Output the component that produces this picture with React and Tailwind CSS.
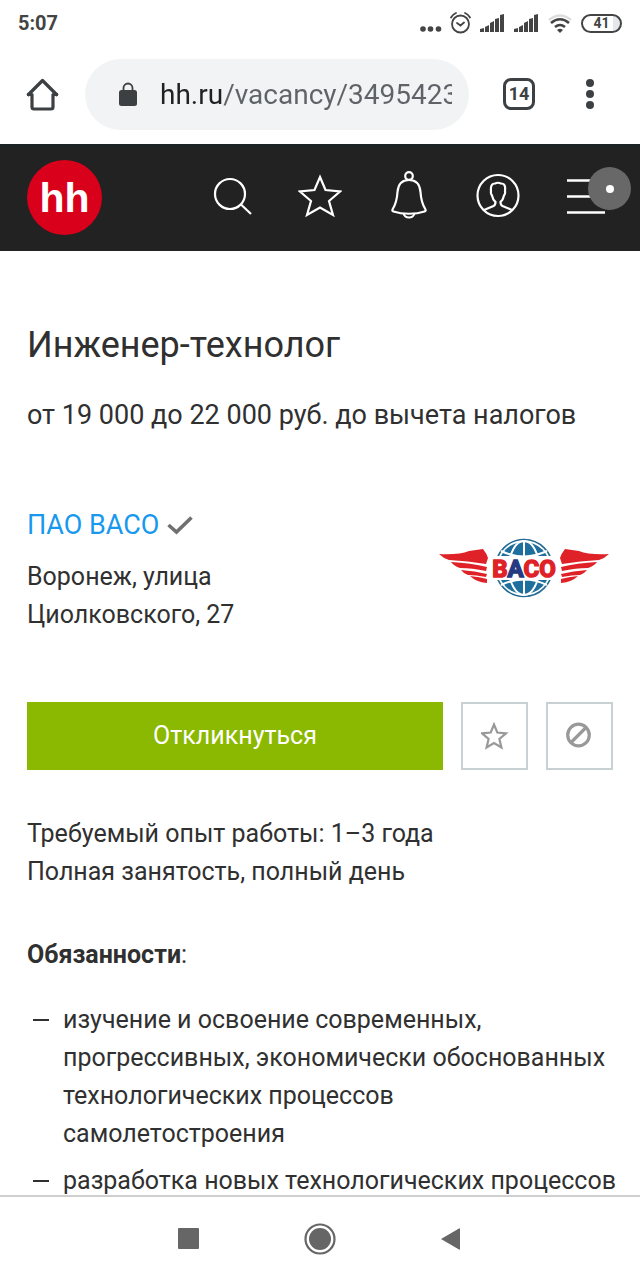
import React, { useState } from "react";

const duties = [
  "изучение и освоение современных, прогрессивных, экономически обоснованных технологических процессов самолетостроения",
  "разработка новых технологических процессов",
];

const SignalIcon = () => (
  <svg width="25" height="18" viewBox="0 0 25 18" fill="#444">
    <path d="M0 18v-3l4-1v4zM5 18v-5l4-2v7zM10 18V9l4-2v11zM15 18V5l4-1v14zM20 18V1l4-1v18z" />
  </svg>
);

const StatusBar = () => (
  <div className="flex h-[50px] shrink-0 items-center justify-between pr-[18px] pb-1 pl-[18px] text-[#444]">
    <span className="text-[20px] leading-6 font-bold">5:07</span>
    <div className="flex items-center gap-[9px]">
      <div className="flex items-center gap-2">
        <svg width="22" height="22" viewBox="0 0 22 22" fill="#444">
          <circle cx="3" cy="17" r="2.8" />
          <circle cx="10.5" cy="17" r="2.8" />
          <circle cx="18.5" cy="17" r="2.8" />
        </svg>
        <svg width="21" height="22" viewBox="0 0 21 22" fill="none" stroke="#444" strokeWidth="1.8" strokeLinecap="round">
          <circle cx="10.5" cy="12" r="8.5" />
          <path d="M7 11l3.500 2.500 3.500-3M1 5.500Q2.500 2.500 6 1M20 5.500Q18.500 2.500 15 1" />
        </svg>
      </div>
      <SignalIcon />
      <SignalIcon />
      <svg width="24" height="19" viewBox="0 0 24 19" fill="none" strokeWidth="2.600">
        <path d="M1 6Q12-3 23 6" stroke="#ddd" />
        <path d="M3 9Q12 1.500 21 9" stroke="#444" />
        <path d="M7 13Q12 9 17 13" stroke="#444" />
        <path d="M9 16q3-2.500 6 0l-3 3z" fill="#444" stroke="none" />
      </svg>
      <span className="flex h-[19px] w-[41px] items-center justify-center rounded-full border-2 border-[#444] bg-linear-to-r from-white from-80% to-gray-200 to-80% text-[14px] leading-4 font-bold">
        41
      </span>
    </div>
  </div>
);

const BrowserBar = () => {
  const [url, setUrl] = useState("hh.ru/vacancy/34954235");

  return (
    <div className="flex h-[94px] shrink-0 items-center justify-between pr-[39px] pb-1.5 pl-[26px]">
      <button aria-label="Домой">
        <svg width="33" height="33" viewBox="0 0 33 33" fill="none" stroke="#3c4043" strokeWidth="3.200">
          <path d="M1.500 17.500L16.500 2.500l15 15M1 16.500h5V29q0 2 2 2h17q2 0 2-2V16.500h5" strokeLinejoin="round" />
        </svg>
      </button>
      <label className="ml-[26px] flex h-[71px] min-w-0 flex-1 items-center rounded-full bg-[#f1f3f4] pr-[17px] pl-[34px]">
        <svg className="shrink-0" width="18" height="25" viewBox="0 0 18 25" fill="none">
          <path d="M4.500 10V6a4.500 4.500 0 0 1 9 0v4" stroke="#3c4043" strokeWidth="1.800" />
          <rect y="8" width="18" height="16" rx="2.500" fill="#3c4043" />
        </svg>
        <input
          aria-label="Адрес"
          value={url}
          onChange={(e) => setUrl(e.target.value)}
          className="ml-[23px] w-full min-w-0 bg-[linear-gradient(90deg,#202124_63px,#5f6368_63px)] bg-clip-text pt-0.5 text-[28px] leading-9 text-transparent outline-none"
        />
      </label>
      <button
        aria-label="Вкладки"
        className="ml-[34px] flex size-8 items-center justify-center rounded-lg border-3 border-[#3c4043] text-[18px] leading-5 font-bold text-[#3c4043]"
      >
        14
      </button>
      <button aria-label="Меню браузера" className="ml-[44px] flex w-[22px] justify-center">
        <svg width="8" height="30" viewBox="0 0 8 30" fill="#3c4043">
          <circle cx="4" cy="4" r="4" />
          <circle cx="4" cy="15" r="4" />
          <circle cx="4" cy="26" r="4" />
        </svg>
      </button>
    </div>
  );
};

const SiteHeader = () => (
  <header className="relative flex h-[107px] shrink-0 items-center border-t-4 border-[#1b2422] bg-[#222] pr-[29px] pb-1 pl-[27px]">
    <a
      href="#"
      className="flex size-[75px] items-center justify-center rounded-full bg-[#d9001b] font-['Liberation_Sans',sans-serif] text-[41px] leading-[48px] font-bold text-white"
    >
      hh
    </a>
    <nav className="ml-auto flex items-center gap-[45px] pb-1">
      <button aria-label="Поиск">
        <svg width="44" height="50" viewBox="0 0 44 50" fill="none" stroke="#fff" strokeWidth="2.200">
          <circle cx="21" cy="23" r="15" />
          <path d="M32 33.500L42 43" />
        </svg>
      </button>
      <button aria-label="Избранное">
        <svg width="44" height="50" viewBox="0 0 44 50" fill="none" stroke="#fff" strokeWidth="2.200">
          <path d="M22 6l5.500 13 14.500 1.500-11 9.500 4 14-13-7.500-13 7.500 4-14-11-9.500 14.500-1.500z" />
        </svg>
      </button>
      <button aria-label="Уведомления">
        <svg width="44" height="50" viewBox="0 0 44 50" fill="none" stroke="#fff" strokeWidth="2.200">
          <circle cx="22" cy="5" r="3.800" />
          <path d="M22 9c-8 0-11 6-11.500 12-.5 8-1.500 12-5 17.500q-.5 1.500 1 2c9 3 22 3 31 0q1.500-.5 1-2c-3.500-5.500-4.500-9.500-5-17.500-.5-6-3.500-12-11.500-12z" />
          <path d="M16.500 42c.5 6 10.500 6 11 0" />
        </svg>
      </button>
      <button aria-label="Профиль">
        <svg width="44" height="50" viewBox="0 0 44 50" fill="none" stroke="#fff" strokeWidth="2.200">
          <circle cx="22" cy="24.500" r="20.500" />
          <path d="M8 39l9.500-4q2-1 2-4c-2-1.500-3-4-3.500-6.500q-1.500-2-1-4c-.5-5 .5-8 4-8q3-1.500 6 0c4 0 4.500 3 4 8q.5 2-1 4c-.5 2.500-1.500 5-3.500 6.500q0 3 2 4L36 39" />
        </svg>
      </button>
      <button aria-label="Меню">
        <svg width="46" height="50" viewBox="0 0 46 50" fill="none" stroke="#fff" strokeWidth="2.400">
          <path d="M2 9.500h38M2 25.500h38M2 41.500h38" />
        </svg>
      </button>
    </nav>
    {/* floating assistive touch ball */}
    <div className="absolute top-[19px] right-[9px] flex size-[43px] items-center justify-center rounded-full bg-[#686868]">
      <div className="size-2 rounded-full bg-white" />
    </div>
  </header>
);

const Wing = () => (
  <path
    fill="#df2228"
    d="M0 16q20 1 30-3l14-2q4 5 5 9l-2 6q-18-3-37-4-6-2-10-6zM12 24q20 1 36 5l-1 4q-14-3-26-3-6-2-9-6zM22 32q14 1 26 4l-1 3q-10-2-18-2-5-2-7-5zM31 38q10 1 17 3v4q-11-1-17-7z"
  />
);

const VasoLogo = () => (
  <svg className="shrink-0" width="170" height="60" viewBox="0 0 170 60">
    <circle cx="85" cy="30" r="28.500" fill="#fff" stroke="#226a93" strokeWidth="1.600" />
    <circle cx="85" cy="30" r="26" fill="#1f6f9e" />
    <g fill="none" stroke="#fff" strokeWidth="2">
      <path d="M85 3v54M62 13Q85 24 108 13M62 47Q85 36 108 47" />
      <ellipse cx="85" cy="30" rx="15" ry="27" />
    </g>
    <rect x="52" y="18" width="66" height="24" fill="#fff" />
    <Wing />
    <g transform="matrix(-1 0 0 1 170 0)">
      <Wing />
    </g>
    <text
      x="85"
      y="39"
      textAnchor="middle"
      fill="#df2228"
      stroke="#df2228"
      strokeWidth="1.500"
      fontFamily="Roboto, sans-serif"
      fontWeight="700"
      fontSize="24"
    >
      В<tspan fill="#253a80" stroke="#253a80">А</tspan>СО
    </text>
  </svg>
);

const Vacancy = () => (
  <main className="min-h-0 flex-1 overflow-hidden px-[27px] pt-[70px] text-[25px] leading-[38px] text-[#303030]">
    <h1 className="text-[36px] leading-[48px]">Инженер-технолог</h1>
    <p className="mt-[26px] text-[27px] leading-10">от 19 000 до 22 000 руб. до вычета налогов</p>

    <section className="mt-[70px] flex items-start justify-between">
      <div className="w-60">
        <div className="flex items-center gap-2 text-[27px] leading-10">
          <a href="#" className="text-[#1899ed]">
            ПАО ВАСО
          </a>
          <svg width="26" height="19" viewBox="0 0 26 19" fill="none" stroke="#707070" strokeWidth="3.600">
            <path d="M1.500 9l8 7L24.500 1.500" />
          </svg>
        </div>
        <p className="mt-[13px]">Воронеж, улица Циолковского, 27</p>
      </div>
      <div className="mt-[33px] mr-1">
        <VasoLogo />
      </div>
    </section>

    <div className="mt-[68px] flex gap-[18px]">
      <button className="h-[68px] flex-1 bg-[#8bb800] text-white">Откликнуться</button>
      <button
        aria-label="В избранное"
        className="flex h-[68px] w-[67px] items-center justify-center border-2 border-[#c9d0d3]"
      >
        <svg width="28" height="28" viewBox="0 0 28 28" fill="none" stroke="#999" strokeWidth="2.200">
          <path d="M13 2.500l3.300 8 8.700.8-6.600 5.700 2 8.500-7.400-4.500-7.400 4.500 2-8.500L1 11.300l8.700-.8z" />
        </svg>
      </button>
      <button
        aria-label="Скрыть вакансию"
        className="flex h-[68px] w-[67px] items-center justify-center border-2 border-[#c9d0d3]"
      >
        <svg width="28" height="28" viewBox="0 0 28 28" fill="none" stroke="#999" strokeWidth="3.200">
          <circle cx="12.500" cy="13" r="10.800" />
          <path d="M5 20.500l15-15" />
        </svg>
      </button>
    </div>

    <p className="mt-[45px]">Требуемый опыт работы: 1–3 года</p>
    <p>Полная занятость, полный день</p>

    <p className="mt-[45px]">
      <strong>Обязанности</strong>:
    </p>
    <ul className="-mr-1.5 mt-[27px] flex flex-col gap-[9px]">
      {duties.map((duty) => (
        <li key={duty} className="flex">
          <span className="w-9 shrink-0 pl-1.5">
            <span className="block h-5 w-4 border-b-2 border-[#303030]" />
          </span>
          <span>{duty}</span>
        </li>
      ))}
    </ul>
  </main>
);

const NavigationBar = () => (
  <div className="flex h-[85px] shrink-0 items-center justify-center gap-[104px] border-t-2 border-[#cfcfcf] bg-white">
    <button aria-label="Недавние">
      <svg width="22" height="22" viewBox="0 0 22 22">
        <rect width="21" height="21" rx="1" fill="#666" />
      </svg>
    </button>
    <button aria-label="Главный экран">
      <svg width="32" height="32" viewBox="0 0 32 32">
        <circle cx="16" cy="16" r="14.500" fill="none" stroke="#666" strokeWidth="2.200" />
        <circle cx="16" cy="16" r="11" fill="#666" />
      </svg>
    </button>
    <button aria-label="Назад">
      <svg width="22" height="24" viewBox="0 0 22 24">
        <path d="M1 12L19 1.500q1-.5 1 .5v20q0 1-1 .5z" fill="#666" />
      </svg>
    </button>
  </div>
);

const App = () => {
  return (
    <div className="flex h-screen flex-col bg-white font-['Roboto',sans-serif]">
      <StatusBar />
      <BrowserBar />
      <SiteHeader />
      <Vacancy />
      <NavigationBar />
    </div>
  );
};

export default App;
